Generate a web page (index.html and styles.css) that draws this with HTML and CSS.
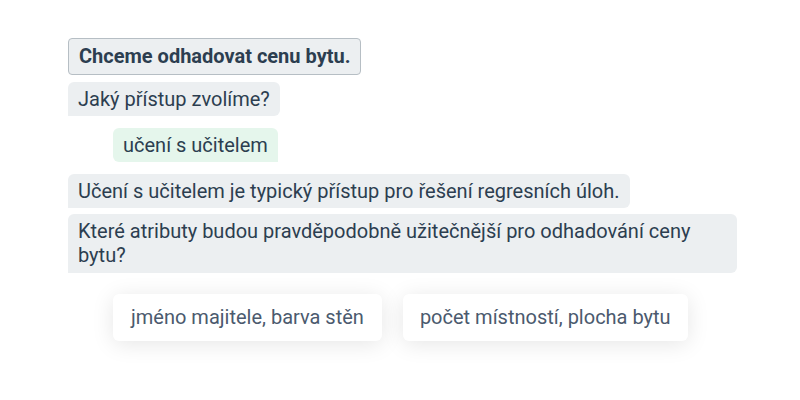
FILE: index.html
```html
<!DOCTYPE html>
<html lang="cs">
<head>
<meta charset="utf-8">
<link rel="stylesheet" href="styles.css">
</head>
<body>
<div class="chat">
  <div class="msg bot title">Chceme odhadovat cenu bytu.</div>
  <div class="msg bot">Jaký přístup zvolíme?</div>
  <div class="msg user">učení s učitelem</div>
  <div class="msg bot">Učení s učitelem je typický přístup pro řešení regresních úloh.</div>
  <div class="msg bot wide">Které atributy budou pravděpodobně užitečnější pro odhadování ceny bytu?</div>
  <div class="choices">
    <button class="choice">jméno majitele, barva stěn</button>
    <button class="choice">počet místností, plocha bytu</button>
  </div>
</div>
</body>
</html>
```

FILE: styles.css
```css
html, body {
  margin: 0;
  padding: 0;
  background: #ffffff;
}
body {
  font-family: Roboto, "Liberation Sans", sans-serif;
  font-size: 20px;
  color: #2c3e50;
}
.chat {
  width: 670px;
  padding: 38px 0 40px 68px;
  display: flex;
  flex-direction: column;
  align-items: flex-start;
}
.msg {
  padding: 5px 10px;
  line-height: 24px;
  border-radius: 6px;
}
.bot {
  background: #eceff1;
  border-bottom-left-radius: 0;
  margin-bottom: 6px;
}
.title {
  font-weight: 700;
  border: 1px solid #b6bec4;
  border-radius: 4px;
  padding: 5px 10px 6px;
  margin-bottom: 7px;
}
.user {
  background: #e5f6ec;
  margin: 6px 0 12px 45px;
  border-bottom-right-radius: 0;
}
.wide {
  width: 649px;
  padding-bottom: 6px;
}
.choices {
  display: flex;
  gap: 21px;
  margin: 15px 0 0 45px;
}
.choice {
  font-family: Roboto, "Liberation Sans", sans-serif;
  font-size: 20px;
  color: #4b5a6e;
  background: #ffffff;
  border: none;
  border-radius: 6px;
  padding: 11px 18px;
  line-height: 25px;
  box-shadow: 0 3px 22px rgba(0, 0, 0, 0.1);
}
.choice + .choice {
  padding: 11px 17px 11px 17px;
}
```
